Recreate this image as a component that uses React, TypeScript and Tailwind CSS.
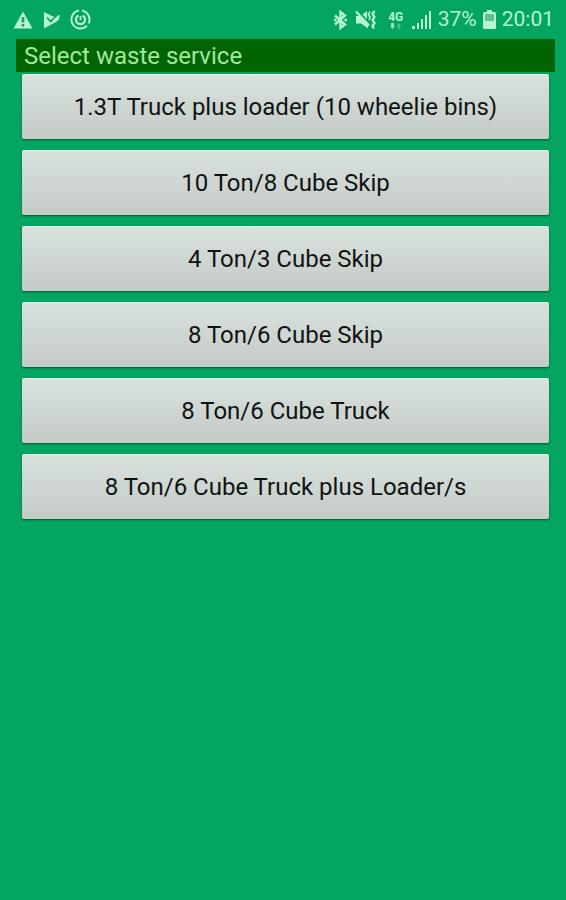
import { useState } from "react";

const services = [
  "1.3T Truck plus loader (10 wheelie bins)",
  "10 Ton/8 Cube Skip",
  "4 Ton/3 Cube Skip",
  "8 Ton/6 Cube Skip",
  "8 Ton/6 Cube Truck",
  "8 Ton/6 Cube Truck plus Loader/s",
];

function WarningIcon() {
  return (
    <svg width="20" height="18" viewBox="0 0 20 18">
      <path d="M10 0.5 L19.5 17.5 H0.5 Z" fill="currentColor" />
      <path d="M10 6 V11.5 M10 13 V15.5" stroke="#1f9a64" strokeWidth="2.6" />
    </svg>
  );
}

function PlayCheckIcon() {
  return (
    <svg width="17" height="18" viewBox="0 0 17 18">
      <path d="M1 1 L8 4.5 L11.5 6 L15 5 L16.5 8 L13 11 L1 17.5 Z" fill="currentColor" />
      <path d="M4 6.5 L7.5 10.5 L15.5 3.5" fill="none" stroke="#1f9a64" strokeWidth="1.8" />
      <path d="M11 9.5 L16.5 4.5" fill="none" stroke="currentColor" strokeWidth="1.8" />
    </svg>
  );
}

function PowerIcon() {
  return (
    <svg width="21" height="21" viewBox="0 0 22 22" fill="none" stroke="currentColor">
      <path d="M12.5 1.6 A9.5 9.5 0 0 1 19.5 15 M17.8 17.6 A9.5 9.5 0 1 1 9.5 1.6" strokeWidth="2.1" />
      <path d="M13.2 6.8 A4.8 4.8 0 1 1 8.8 6.8" strokeWidth="2.3" />
      <path d="M11 7.5 V11.5" strokeWidth="2" />
    </svg>
  );
}

function BluetoothIcon() {
  return (
    <svg width="13" height="20" viewBox="0 0 13 20" fill="none" stroke="currentColor" strokeWidth="2.4">
      <path d="M1 5.5 L11 14.5 L6.5 18 V2 L11 5.5 L1 14.5" />
      <path d="M0 10 H2.5 M10.5 10 H13" />
    </svg>
  );
}

function MuteVibrateIcon() {
  return (
    <svg width="21" height="20" viewBox="0 0 21 20">
      <path d="M1 6 H4 L13 13 V18.5 L6 13.5 H1 Z M7.5 4.5 L12 1 V9 Z" fill="currentColor" />
      <path d="M1 1.5 L14 15.5" stroke="currentColor" strokeWidth="2.4" />
      <path d="M15 1.5 L13.5 4.5 L15 7 L14 10" fill="none" stroke="currentColor" strokeWidth="1.6" />
      <path d="M19.5 1 L17.5 4 L19.5 7 L17.5 10 L19.5 13 L17.5 16 L19 18.5" fill="none" stroke="currentColor" strokeWidth="2.3" />
    </svg>
  );
}

function NetworkIcon() {
  return (
    <div className="flex w-4 flex-col items-center">
      <span className="text-xs leading-3 font-bold">4G</span>
      <svg width="12" height="6" viewBox="0 0 12 6">
        <path d="M1 0 H4 V3 H5 L2.5 6 L0 3 H1 Z" fill="currentColor" opacity="0.8" />
        <path d="M8 6 H10 V3 H11.5 L9 0 L6.5 3 H8 Z" fill="currentColor" opacity="0.35" />
      </svg>
    </div>
  );
}

function SignalIcon() {
  return (
    <svg width="20" height="18" viewBox="0 0 20 18" fill="currentColor">
      <rect x="0" y="15" width="3" height="3" />
      <rect x="5" y="12" width="2" height="6" />
      <rect x="9" y="8" width="2" height="10" />
      <rect x="13" y="4" width="2" height="14" />
      <rect x="17" y="0" width="2" height="18" />
    </svg>
  );
}

function BatteryIcon() {
  return (
    <svg width="13" height="19" viewBox="0 0 13 19" fill="currentColor">
      <rect x="4" y="0" width="5" height="3" />
      <rect x="0" y="2" width="13" height="17" rx="1.5" />
      <rect x="2" y="4" width="9" height="7" fill="#65bd91" />
    </svg>
  );
}

function StatusBar() {
  return (
    <header className="flex h-[39px] items-center justify-between pr-3 pl-[13px] text-[#b5f5d0]">
      <div className="flex items-center gap-[10px]">
        <WarningIcon />
        <PlayCheckIcon />
        <PowerIcon />
      </div>
      <div className="flex items-center">
        <BluetoothIcon />
        <span className="ml-2">
          <MuteVibrateIcon />
        </span>
        <span className="ml-3">
          <NetworkIcon />
        </span>
        <span className="ml-2">
          <SignalIcon />
        </span>
        <span className="ml-[6px] text-[21px]">37%</span>
        <span className="mx-[6px]">
          <BatteryIcon />
        </span>
        <span className="text-[21px]">20:01</span>
      </div>
    </header>
  );
}

export default function App() {
  const [selected, setSelected] = useState("");

  return (
    <div className="min-h-screen bg-[#03a560] font-[Roboto,sans-serif]">
      <StatusBar />
      <main className="pr-[11px] pl-4">
        <h1 className="bg-[#006400] px-2 pt-px text-[24px] leading-8 text-[#a3e89c]">Select waste service</h1>
        <div className="mt-[2px] flex flex-col gap-[11px] px-[6px]">
          {services.map((service) => (
            <button
              key={service}
              type="button"
              aria-pressed={selected === service}
              onClick={() => setSelected(service)}
              className="h-[65px] rounded-xs border-t border-t-[#e4f3eb] bg-linear-to-b from-[#d8e2dd] to-[#c5cbc7] text-2xl text-[#101311] shadow-[0_1px_2px_#00562f]"
            >
              {service}
            </button>
          ))}
        </div>
      </main>
    </div>
  );
}
